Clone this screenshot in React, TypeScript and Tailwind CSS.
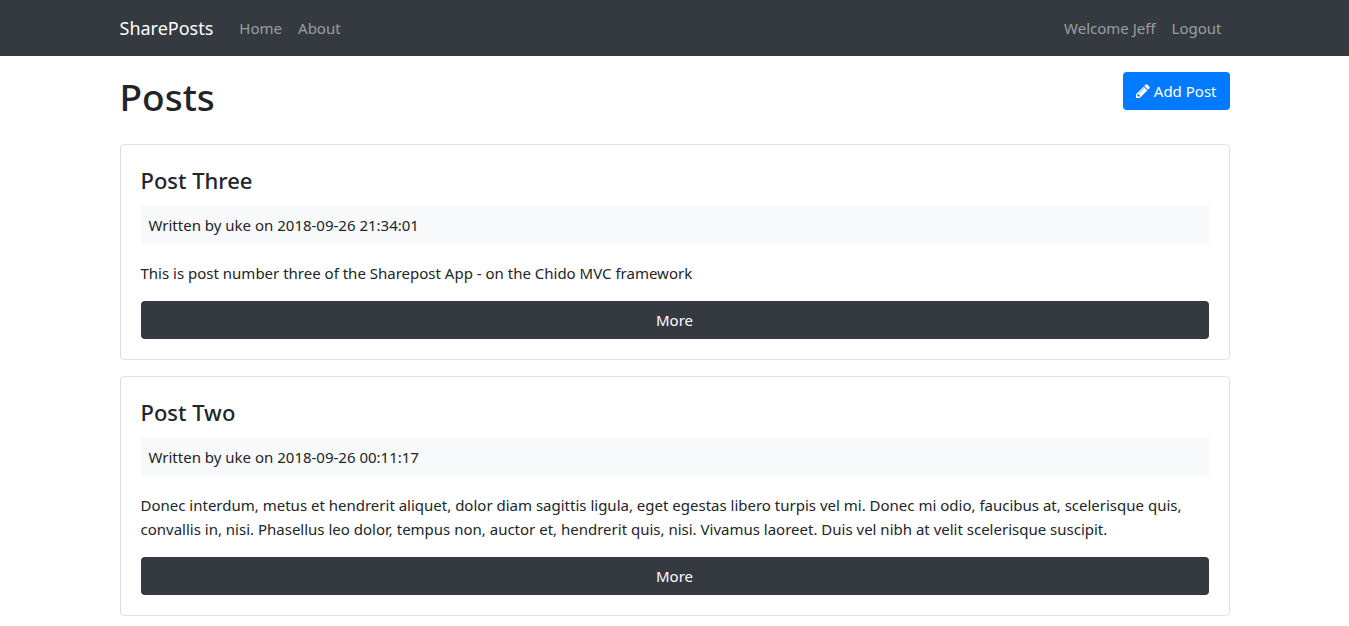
type Post = { title: string; author: string; date: string; body: string };

const posts: Post[] = [
  {
    title: "Post Three",
    author: "uke",
    date: "2018-09-26 21:34:01",
    body: "This is post number three of the Sharepost App - on the Chido MVC framework",
  },
  {
    title: "Post Two",
    author: "uke",
    date: "2018-09-26 00:11:17",
    body: "Donec interdum, metus et hendrerit aliquet, dolor diam sagittis ligula, eget egestas libero turpis vel mi. Donec mi odio, faucibus at, scelerisque quis, convallis in, nisi. Phasellus leo dolor, tempus non, auctor et, hendrerit quis, nisi. Vivamus laoreet. Duis vel nibh at velit scelerisque suscipit.",
  },
];

function PencilIcon() {
  return (
    <svg viewBox="128 128 1536 1536" fill="currentColor" aria-hidden="true" className="size-3.5">
      <path d="M491 1536l91-91-235-235-91 91v107h128v128h107zM1014 608q0-22-22-22-10 0-17 7l-542 542q-7 7-7 17 0 22 22 22 10 0 17-7l542-542q7-7 7-17zM960 416l416 416-832 832h-416v-416zM1643 512q0 53-37 90l-166 166-416-416 166-165q36-38 90-38 53 0 91 38l235 234q37 39 37 91z" />
    </svg>
  );
}

function Navbar() {
  return (
    <nav className="bg-[#343a40] py-2">
      <div className="mx-auto flex max-w-[1140px] items-center px-[15px]">
        <a href="#" className="mr-[18px] py-1 text-lg leading-8 text-white">SharePosts</a>
        <div className="flex flex-1 text-white/50">
          <a href="#" className="p-2">Home</a>
          <a href="#" className="p-2">About</a>
        </div>
        <div className="flex text-white/50">
          <a href="#" className="p-2">Welcome Jeff</a>
          <a href="#" className="p-2">Logout</a>
        </div>
      </div>
    </nav>
  );
}

function PostCard({ post }: { post: Post }) {
  return (
    <article className="mb-4 rounded-sm border border-[#dfdfdf] p-5">
      <h4 className="mb-[10px] text-[22px] leading-[30px] font-medium">{post.title}</h4>
      <div className="mb-4 bg-[#f8f9fa] p-2">
        Written by {post.author} on {post.date}
      </div>
      <p className="mb-4">{post.body}</p>
      <a href="#" className="block rounded-sm bg-[#343a40] py-[7px] text-center text-white">
        More
      </a>
    </article>
  );
}

export default function App() {
  return (
    <div className="bg-white font-['Noto_Sans','Open_Sans',sans-serif] text-[15px] leading-6 text-[#212529]">
      <Navbar />
      <main className="mx-auto max-w-[1140px] px-[15px] pt-4">
        <div className="mb-[22px] flex items-start justify-between">
          <h1 className="text-[37px] leading-[50px] font-medium">Posts</h1>
          <a href="#" className="flex items-center gap-1 rounded-sm bg-[#007bff] px-[13px] py-[7px] text-white">
            <PencilIcon />
            Add Post
          </a>
        </div>
        {posts.map((post) => (
          <PostCard key={post.title} post={post} />
        ))}
      </main>
    </div>
  );
}
